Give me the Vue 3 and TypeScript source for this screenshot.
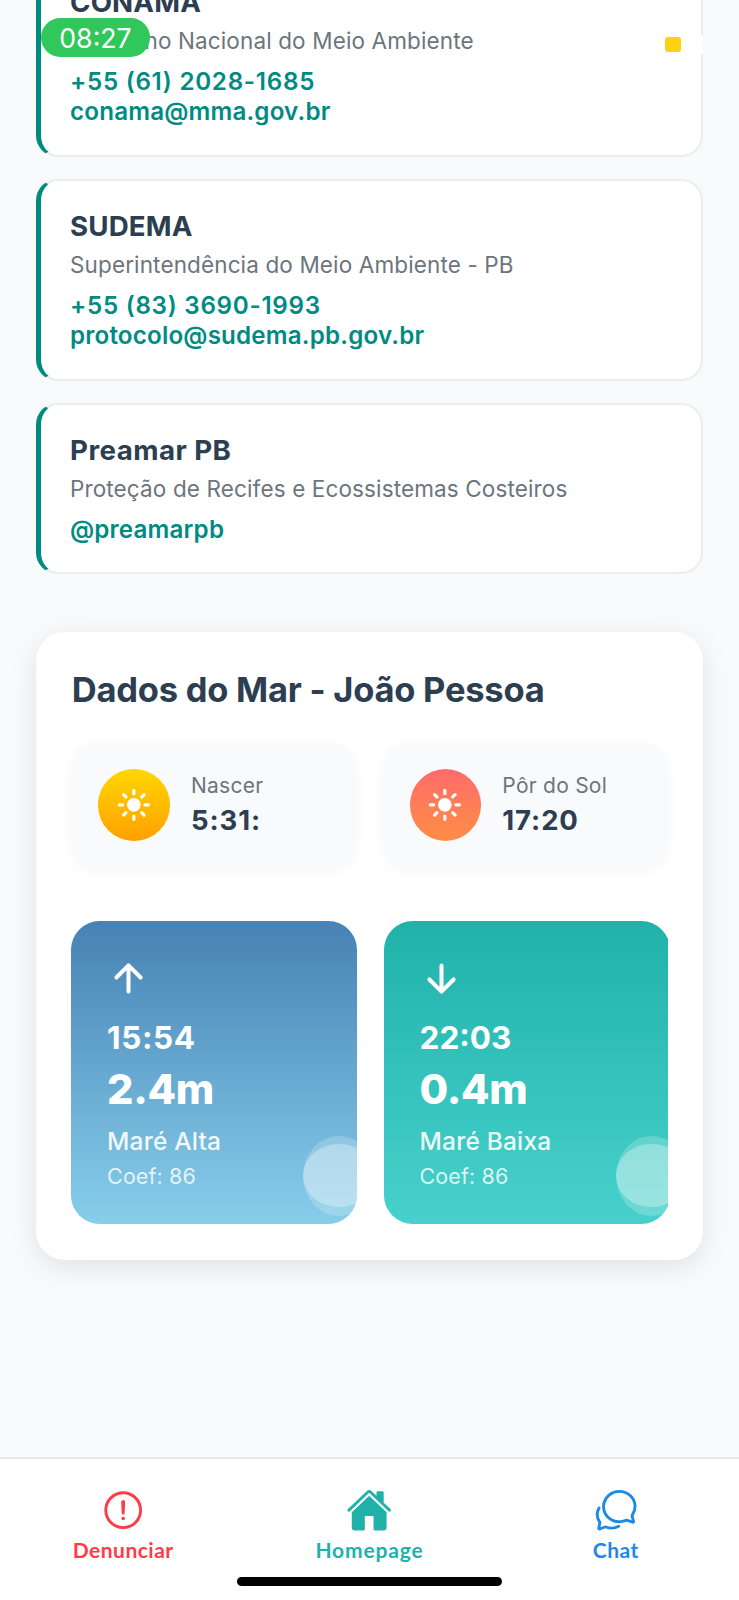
<script setup lang="ts">
interface Contact {
  name: string
  about: string
  phone?: string
  handle: string
}
interface Sun {
  kind: 'rise' | 'set'
  label: string
  time: string
}
interface Tide {
  kind: 'high' | 'low'
  time: string
  height: string
  label: string
  coef: string
}

const contacts: Contact[] = [
  { name: 'CONAMA', about: 'Conselho Nacional do Meio Ambiente', phone: '+55 (61) 2028-1685', handle: 'conama@mma.gov.br' },
  { name: 'SUDEMA', about: 'Superintendência do Meio Ambiente - PB', phone: '+55 (83) 3690-1993', handle: 'protocolo@sudema.pb.gov.br' },
  { name: 'Preamar PB', about: 'Proteção de Recifes e Ecossistemas Costeiros', handle: '@preamarpb' },
]
const suns: Sun[] = [
  { kind: 'rise', label: 'Nascer', time: '5:31:' },
  { kind: 'set', label: 'Pôr do Sol', time: '17:20' },
]
const tides: Tide[] = [
  { kind: 'high', time: '15:54', height: '2.4m', label: 'Maré Alta', coef: 'Coef: 86' },
  { kind: 'low', time: '22:03', height: '0.4m', label: 'Maré Baixa', coef: 'Coef: 86' },
]
</script>

<template>
  <div class="screen">
    <main class="content">
      <section v-for="c in contacts" :key="c.name" class="contact">
        <h3 class="name">{{ c.name }}</h3>
        <p class="about">{{ c.about }}</p>
        <div class="links">
          <a v-if="c.phone" class="link phone">{{ c.phone }}</a>
          <a class="link">{{ c.handle }}</a>
        </div>
      </section>

      <section class="sea">
        <h2 class="sea-title">Dados do Mar - João Pessoa</h2>
        <div class="suns">
          <div v-for="s in suns" :key="s.kind" class="sun">
            <div class="sun-icon" :class="s.kind">
              <svg viewBox="0 0 512 512">
                <circle cx="256" cy="256" r="98" fill="#fff" />
                <path
                  d="M256 48v48M256 416v48M48 256h48M416 256h48M403 109l-34 34M143 369l-34 34M403 403l-34-34M143 143l-34-34"
                  stroke="#fff" stroke-width="46" stroke-linecap="round" />
              </svg>
            </div>
            <div>
              <div class="sun-label">{{ s.label }}</div>
              <div class="sun-time">{{ s.time }}</div>
            </div>
          </div>
        </div>
        <div class="tides">
          <div v-for="t in tides" :key="t.kind" class="tide" :class="t.kind">
            <svg class="arrow" viewBox="0 0 512 512">
              <path :d="t.kind === 'high' ? 'M112 244l144-144 144 144M256 120v292' : 'M112 268l144 144 144-144M256 392V100'" />
            </svg>
            <div class="tide-time">{{ t.time }}</div>
            <div class="tide-height">{{ t.height }}</div>
            <div class="tide-label">{{ t.label }}</div>
            <div class="tide-coef">{{ t.coef }}</div>
            <i class="wave outer"></i>
            <i class="wave inner"></i>
          </div>
        </div>
      </section>
    </main>

    <nav class="tabs">
      <a class="tab report">
        <svg viewBox="0 0 512 512" class="line">
          <circle cx="256" cy="256" r="192" />
          <path d="M250.26 166.05L256 288l5.73-121.95a5.74 5.74 0 00-5.79-6h0a5.74 5.74 0 00-5.68 6z" />
          <circle cx="256" cy="348" r="20" class="dot" />
        </svg>
        <span>Denunciar</span>
      </a>
      <a class="tab home">
        <svg viewBox="0 0 512 512" fill="currentColor">
          <path d="M261.56 101.28a8 8 0 00-11.06 0L66.4 277.15a8 8 0 00-2.47 5.79L63.9 448a32 32 0 0032 32H192a16 16 0 0016-16V328a8 8 0 018-8h80a8 8 0 018 8v136a16 16 0 0016 16h96.06a32 32 0 0032-32V282.94a8 8 0 00-2.47-5.79z" />
          <path d="M490.91 244.15l-74.8-71.56V64a16 16 0 00-16-16h-48a16 16 0 00-16 16v32l-57.92-55.38C272.77 35.14 264.71 32 256 32c-8.68 0-16.72 3.14-22.14 8.63l-212.7 203.5c-6.22 6-7 15.87-1.34 22.37A16 16 0 0043 267.56L250.5 69.28a8 8 0 0111.06 0l207.52 198.28a16 16 0 0022.59-.44c6.14-6.36 5.63-16.86-.76-22.97z" />
        </svg>
        <span>Homepage</span>
      </a>
      <a class="tab chat">
        <svg viewBox="0 0 512 512" class="line">
          <path d="M431 320.6c-1-3.6 1.2-8.6 3.3-12.2a33.68 33.68 0 012.1-3.1A162 162 0 00464 215c.3-92.2-77.5-167-173.7-167-83.9 0-153.9 57.1-170.3 132.9a160.7 160.7 0 00-3.7 34.2c0 92.3 74.8 169.1 171 169.1 15.3 0 35.9-4.6 47.2-7.7s22.5-7.2 25.4-8.3a26.44 26.44 0 019.3-1.7 26 26 0 0110.1 2l56.7 20.1a13.52 13.52 0 003.9 1 8 8 0 008-8 12.85 12.85 0 00-.5-2.7z" />
          <path d="M66.46 232a146.23 146.23 0 006.39 152.67c2.31 3.49 3.61 6.19 3.21 8s-11.93 61.87-11.93 61.87a8 8 0 002.71 7.68A8.17 8.17 0 0072 464a7.26 7.26 0 002.91-.6l56.21-22a15.7 15.7 0 0112 .2c18.94 7.38 39.88 12 60.83 12A159.21 159.21 0 00284 432.11" />
        </svg>
        <span>Chat</span>
      </a>
      <div class="home-bar"></div>
    </nav>

    <div class="clock">08:27</div>
    <div class="indicator"></div>
    <div class="battery"></div>
  </div>
</template>

<style>
body {
  margin: 0;
}
</style>

<style scoped>
* {
  box-sizing: border-box;
  margin: 0;
}
.screen {
  position: relative;
  width: 739px;
  height: 1600px;
  overflow: hidden;
  display: flex;
  flex-direction: column;
  background: #f8fafc;
  font-family: Inter, 'Liberation Sans', sans-serif;
  color: #2c3e50;
}
.content {
  flex: 1;
  min-height: 0;
  margin-top: -45px;
  padding: 0 36px;
}
.contact {
  margin-bottom: 22px;
  padding: 28.3px 28.5px 27px 29px;
  background: #fff;
  border: 2px solid #e9eef0;
  border-left: 5px solid #008b82;
  border-radius: 21.4px;
}
.name {
  font-size: 27.7px;
  line-height: 34px;
  font-weight: 700;
  letter-spacing: 0.15px;
}
.contact:nth-child(3) .name {
  letter-spacing: 0.45px;
}
.about {
  margin-top: 8px;
  font-size: 22.5px;
  line-height: 28px;
  letter-spacing: 0.13px;
  color: #6c757d;
}
.links {
  margin-top: 11.7px;
}
.link {
  display: block;
  font-size: 24.2px;
  line-height: 30.5px;
  font-weight: 600;
  letter-spacing: 0.17px;
  color: #008b82;
}
.phone {
  letter-spacing: 0.72px;
}
.sea {
  margin-top: 57.5px;
  height: 628.5px;
  padding: 37.3px 35.4px 0;
  background: #fff;
  border-radius: 28.6px;
  box-shadow: 0 7px 28px rgba(0, 0, 0, 0.1);
}
.sea-title {
  font-size: 34.5px;
  line-height: 42px;
  font-weight: 700;
  letter-spacing: -0.24px;
  text-indent: 0.4px;
}
.suns {
  display: flex;
  gap: 26.5px;
  margin-top: 31.3px;
}
.sun {
  flex: 1;
  display: flex;
  align-items: center;
  gap: 21.4px;
  height: 125px;
  padding-left: 26.8px;
  background: #f8fafc;
  border-radius: 26px;
  box-shadow: 0 3px 14px rgba(0, 0, 0, 0.04);
}
.sun-icon {
  width: 71.4px;
  height: 71.4px;
  border-radius: 50%;
  display: flex;
  align-items: center;
  justify-content: center;
}
.sun-icon svg {
  width: 35.7px;
  height: 35.7px;
}
.rise {
  background: linear-gradient(#ffd700, #ffa000);
}
.set {
  background: linear-gradient(#ff6b6b, #ff8e45);
}
.sun-label {
  font-size: 21px;
  line-height: 26px;
  letter-spacing: 0.25px;
  color: #6c757d;
}
.sun-time {
  margin-top: 4px;
  font-size: 27.5px;
  line-height: 34px;
  font-weight: 700;
  letter-spacing: 0.9px;
}
.tides {
  display: flex;
  gap: 26.8px;
  margin-top: 53.8px;
  overflow: hidden;
}
.tide {
  position: relative;
  flex: 0 0 285.7px;
  height: 303px;
  padding: 35.7px;
  border-radius: 28.6px;
  overflow: hidden;
  color: #fff;
}
.high {
  background: linear-gradient(#4682b4, #87ceeb);
}
.low {
  background: linear-gradient(#20b2aa, #48d1cc);
}
.arrow {
  display: block;
  width: 43px;
  height: 43px;
  fill: none;
  stroke: #fff;
  stroke-width: 48;
  stroke-linecap: round;
  stroke-linejoin: round;
}
.tide-time {
  margin-top: 19px;
  font-size: 31.5px;
  line-height: 38px;
  font-weight: 700;
  letter-spacing: 0.6px;
}
.low .tide-time {
  letter-spacing: 0;
}
.tide-height {
  margin-top: 7px;
  font-size: 41.5px;
  line-height: 50px;
  font-weight: 800;
  letter-spacing: -0.3px;
}
.tide-label {
  margin-top: 12px;
  font-size: 24.5px;
  line-height: 30px;
  font-weight: 500;
  letter-spacing: 0.18px;
  opacity: 0.9;
}
.tide-coef {
  margin-top: 7px;
  font-size: 21.5px;
  line-height: 26px;
  letter-spacing: 0.1px;
  opacity: 0.8;
}
.wave {
  position: absolute;
  right: -17.8px;
  width: 71.4px;
  border-radius: 50%;
}
.outer {
  bottom: 8.8px;
  height: 80px;
  background: rgba(255, 255, 255, 0.2);
}
.inner {
  bottom: 17.8px;
  height: 62.5px;
  background: rgba(255, 255, 255, 0.3);
}
.tabs {
  position: relative;
  display: grid;
  grid-template-columns: repeat(3, 1fr);
  height: 143px;
  padding-top: 28.3px;
  background: #fff;
  border-top: 2px solid #e6e7e9;
}
.tab {
  display: flex;
  flex-direction: column;
  align-items: center;
  font-family: Lato, sans-serif;
  font-size: 21px;
  line-height: 26px;
  font-weight: 700;
  letter-spacing: 0.5px;
}
.tab svg {
  width: 46.4px;
  height: 46.4px;
  margin-bottom: 3.5px;
}
.line {
  fill: none;
  stroke: currentColor;
  stroke-width: 32;
  stroke-linecap: round;
  stroke-linejoin: round;
}
.dot {
  fill: currentColor;
  stroke: none;
}
.report {
  color: #ff3b47;
}
.home {
  color: #20b2aa;
  letter-spacing: 0.85px;
}
.chat {
  color: #1e88e5;
}
.home-bar {
  position: absolute;
  left: 237px;
  bottom: 14px;
  width: 265px;
  height: 9px;
  border-radius: 5px;
  background: #000;
}
.clock {
  position: absolute;
  left: 41px;
  top: 18px;
  width: 109px;
  height: 39px;
  border-radius: 20px;
  background: #30c85a;
  color: #fff;
  font-size: 26.7px;
  line-height: 40px;
  text-align: center;
}
.indicator {
  position: absolute;
  left: 665px;
  top: 36.5px;
  width: 16px;
  height: 15.5px;
  border-radius: 3px;
  background: #fed211;
}
.battery {
  position: absolute;
  left: 700px;
  top: 35px;
  width: 3px;
  height: 19px;
  background: #fff;
}
</style>
